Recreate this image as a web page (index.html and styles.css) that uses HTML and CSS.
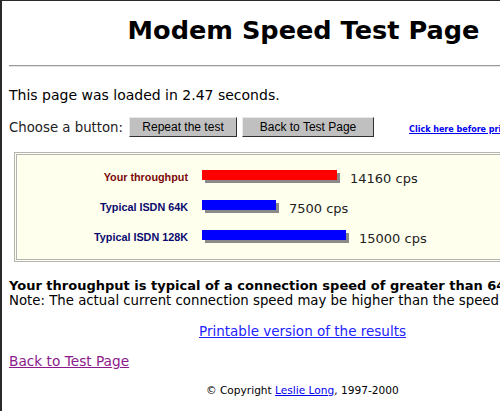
FILE: index.html
```html
<!DOCTYPE html>
<html lang="en">
<head>
	<meta charset="UTF-8" />
	<title>Modem Speed Test Page</title>
	<link rel="stylesheet" href="styles.css">
</head>
<body>
    <div class="page">
        <h1 class="title">Modem Speed Test Page</h1>
        <hr class="rule" />

        <p class="loaded">This page was loaded in 2.47 seconds.</p>

        <div class="choose">
            <span class="choose-label">Choose a button:</span>
            <button class="btn btn-repeat">Repeat the test</button>
            <button class="btn btn-back">Back to Test Page</button>
            <a class="print-tip" href="#">Click here before printing</a>
        </div>

        <div class="results">
            <div class="row">
                <span class="row-label mine">Your throughput</span>
                <span class="bar bar-red" style="width:135px"></span>
                <span class="value">14160 cps</span>
            </div>
            <div class="row">
                <span class="row-label">Typical ISDN 64K</span>
                <span class="bar bar-blue" style="width:74px"></span>
                <span class="value">7500 cps</span>
            </div>
            <div class="row">
                <span class="row-label">Typical ISDN 128K</span>
                <span class="bar bar-blue" style="width:144px"></span>
                <span class="value">15000 cps</span>
            </div>
        </div>

        <p class="summary">
            <span class="verdict">Your throughput is typical of a connection speed of greater than 64,000 bps.</span><br />
            Note: The actual current connection speed may be higher than the speed indicated.
        </p>

        <p class="printable"><a href="#">Printable version of the results</a></p>

        <p class="back"><a href="#">Back to Test Page</a></p>

        <p class="copy">&copy; Copyright <a href="#">Leslie Long</a>, 1997-2000</p>
    </div>
</body>
</html>
```

FILE: styles.css
```css
html, body {
    margin: 0;
    padding: 0;
    background-color: #ffffff;
    overflow: hidden;
}

body {
    font-family: "DejaVu Sans", Verdana, sans-serif;
    color: #000;
}

.page {
    width: 700px;
    height: 420px;
    border-top: 1px solid #2a2a2a;
    border-left: 2px solid #2a2a2a;
    padding-left: 7px;
    white-space: nowrap;
}

.title {
    width: 589px;
    margin: 14px 0 0 0;
    font-size: 25.6px;
    line-height: 30px;
    font-weight: bold;
    text-align: center;
}

.rule {
    margin: 20px 0 0 0;
    border: none;
    border-top: 1px solid #9a9a9a;
    border-bottom: 1px solid #e4e4e4;
    height: 0;
}

.loaded {
    margin: 20px 0 0 0;
    font-size: 14px;
    line-height: 16px;
}

.choose {
    display: flex;
    align-items: center;
    margin-top: 14px;
    height: 20px;
}

.choose-label {
    font-size: 13.3px;
    color: #222;
    margin-right: 6px;
}

.btn {
    height: 20px;
    padding: 0;
    font-family: "Liberation Sans", Arial, sans-serif;
    font-size: 12px;
    color: #000;
    background-color: #c0c0c0;
    border: 1px solid;
    border-color: #e8e8e8 #303030 #303030 #e8e8e8;
    margin-right: 5px;
}

.btn-repeat {
    width: 108px;
}

.btn-back {
    width: 132px;
}

.print-tip {
    margin-left: 30px;
    margin-top: 5px;
    font-size: 8px;
    font-weight: bold;
    color: #0000ee;
}

.results {
    margin: 15px 0 0 5px;
    border: 3px double #b4b4b4;
    background-color: #ffffee;
    padding: 5px 0 9px 0;
}

.row {
    display: flex;
    align-items: center;
    height: 30px;
}

.row-label {
    width: 171px;
    text-align: right;
    font-family: "Liberation Sans", Arial, sans-serif;
    font-size: 10.8px;
    font-weight: bold;
    color: #0a0a6e;
    margin-top: 4px;
}

.row-label.mine {
    color: #7a0a0a;
}

.bar {
    display: inline-block;
    height: 10px;
    margin-left: 14px;
    box-shadow: 3px 3px 0 #8a8a8a;
}

.bar-red {
    background-color: #ff0000;
}

.bar-blue {
    background-color: #0000ff;
}

.value {
    margin-left: 13px;
    margin-top: 6px;
    font-size: 13px;
    color: #222;
}

.summary {
    margin: 16px 0 0 0;
    font-size: 13.3px;
    line-height: 15px;
}

.verdict {
    font-size: 13px;
    font-weight: bold;
}

.printable {
    margin: 15px 0 0 190px;
    font-size: 13.5px;
    line-height: 16px;
}

.printable a {
    color: #2222ff;
}

.back {
    margin: 14px 0 0 0;
    font-size: 13.7px;
    line-height: 16px;
}

.back a {
    color: #8b1a8b;
}

.copy {
    margin: 14px 0 0 197px;
    font-size: 10.6px;
    line-height: 14px;
}

.copy a {
    color: #0000ee;
}
```
